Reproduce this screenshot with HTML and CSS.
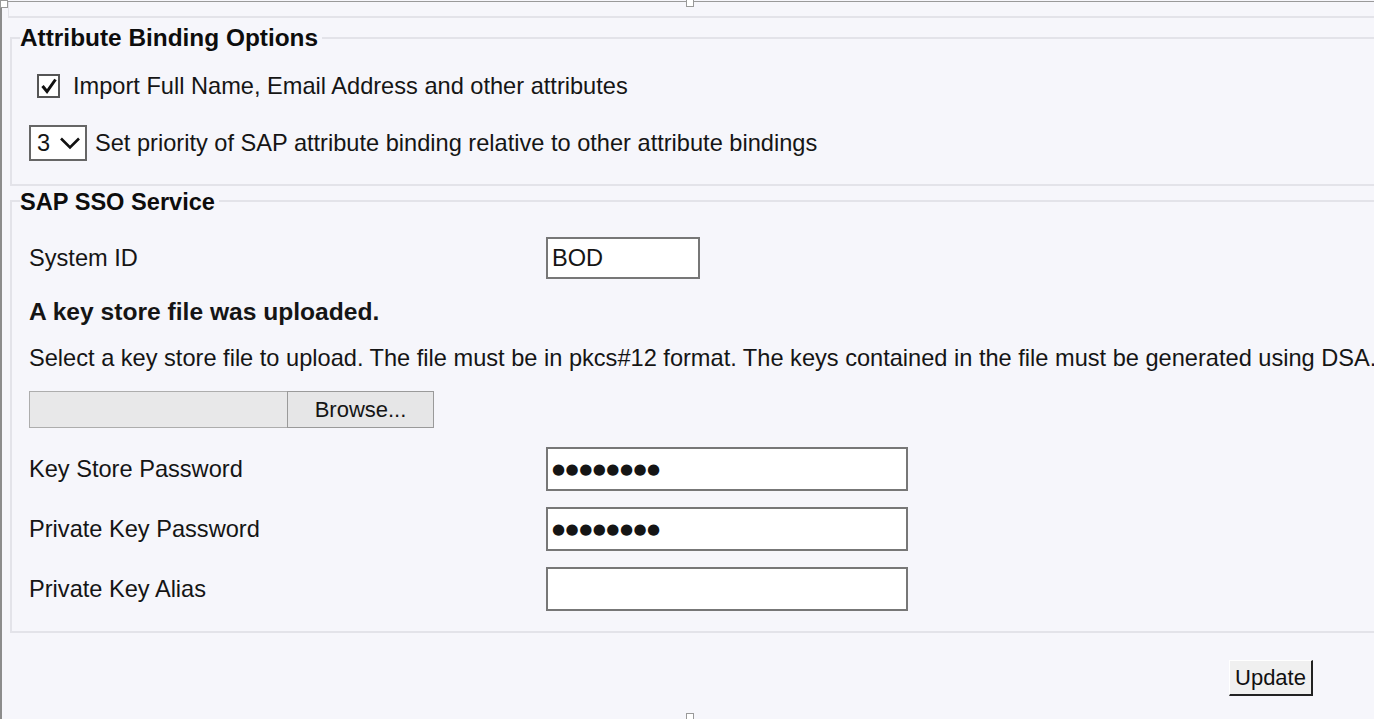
FILE: index.html
```html
<!DOCTYPE html>
<html>
<head>
<meta charset="utf-8">
<link rel="stylesheet" href="styles.css">
</head>
<body>
<div class="frame">
  <div class="top-panel"></div>

  <fieldset class="group group-attr">
    <legend class="legend">Attribute Binding Options</legend>
    <div class="row row-check">
      <span class="checkbox">
        <svg width="18" height="18" viewBox="0 0 18 18"><path d="M2.5 9 L7 14.5 L15.5 2.5" fill="none" stroke="#111" stroke-width="3" stroke-linejoin="miter"/></svg>
      </span>
      <span class="text">Import Full Name, Email Address and other attributes</span>
    </div>
    <div class="row row-select">
      <span class="select">
        <span class="select-val">3</span>
        <svg width="22" height="14" viewBox="0 0 22 14"><path d="M2 2.5 L11 11.5 L20 2.5" fill="none" stroke="#111" stroke-width="2.6"/></svg>
      </span>
      <span class="text">Set priority of SAP attribute binding relative to other attribute bindings</span>
    </div>
  </fieldset>

  <fieldset class="group group-sso">
    <legend class="legend legend-sso">SAP SSO Service</legend>
    <div class="form-row row-sysid">
      <span class="label">System ID</span>
      <span class="input input-short">BOD</span>
    </div>
    <div class="line bold line-uploaded">A key store file was uploaded.</div>
    <div class="line line-select">Select a key store file to upload. The file must be in pkcs#12 format. The keys contained in the file must be generated using DSA.</div>
    <div class="file-row">
      <span class="file-field"></span>
      <span class="file-btn">Browse...</span>
    </div>
    <div class="form-row row-pw">
      <span class="label">Key Store Password</span>
      <span class="input input-long"><span class="dots">●●●●●●●●</span></span>
    </div>
    <div class="form-row row-pw">
      <span class="label">Private Key Password</span>
      <span class="input input-long"><span class="dots">●●●●●●●●</span></span>
    </div>
    <div class="form-row row-pw">
      <span class="label">Private Key Alias</span>
      <span class="input input-long"></span>
    </div>
  </fieldset>

  <div class="actions">
    <span class="btn-update">Update</span>
  </div>

  <span class="handle handle-tl"></span>
  <span class="handle handle-tc"></span>
  <span class="handle handle-bc"></span>
</div>
</body>
</html>
```

FILE: styles.css
```css
html, body {
  margin: 0;
  padding: 0;
  background: #f6f6fb;
  overflow: hidden;
}
body {
  font-family: "Liberation Sans", Arial, sans-serif;
  font-size: 23.6px;
  color: #151515;
}
.frame {
  position: relative;
  height: 717px;
  border-left: 2px solid #8c8c8c;
  border-top: 1px solid #9a9a9a;
  margin-top: 1px;
  background: #f6f6fb;
}
.top-panel {
  height: 14px;
  margin-left: 6px;
  border-left: 1px solid #e2e2e8;
  border-bottom: 2px solid #e3e3e9;
}
.group {
  margin: 0 -30px 0 8px;
  padding: 0 0 0 8px;
  border: 2px solid #e3e3e9;
  border-right: none;
}
.legend {
  font-weight: bold;
  font-size: 24.4px;
  padding: 0 4px 0 0;
  margin-left: 0;
  color: #0d0d0d;
}
.legend-sso {
  font-size: 23.6px;
  padding-top: 3px;
}
.group-attr {
  margin-top: 6px;
  height: 162px;
  box-sizing: border-box;
}
.group-sso {
  margin-top: 0;
  height: 447px;
  box-sizing: border-box;
}
.row {
  display: flex;
  align-items: center;
}
.row-check {
  height: 40px;
  margin-top: 14px;
  padding-left: 17px;
}
.checkbox {
  width: 19px;
  height: 20px;
  border: 2px solid #555;
  background: #fff;
  display: flex;
  align-items: center;
  justify-content: center;
  margin-right: 13px;
}
.row-select {
  height: 42px;
  margin-top: 16px;
  padding-left: 9px;
}
.select {
  width: 58px;
  height: 36px;
  border: 2px solid #666;
  background: #fff;
  box-sizing: border-box;
  display: flex;
  align-items: center;
  padding-left: 6px;
  gap: 9px;
  margin-right: 8px;
}
.form-row {
  display: flex;
  align-items: center;
  padding-left: 9px;
}
.label {
  width: 517px;
}
.row-sysid {
  height: 42px;
  margin-top: 21px;
}
.input {
  background: #fff;
  border: 2px solid #777;
  box-sizing: border-box;
  display: flex;
  align-items: center;
  padding-left: 4px;
}
.input-short {
  width: 154px;
  height: 42px;
}
.input-long {
  width: 362px;
  height: 44px;
}
.dots {
  font-family: "DejaVu Sans", sans-serif;
  font-size: 15px;
  letter-spacing: 0.5px;
}
.row-pw {
  height: 44px;
  margin-top: 16px;
}
.line {
  padding-left: 9px;
  white-space: nowrap;
}
.bold {
  font-weight: bold;
  font-size: 24.6px;
}
.line-uploaded {
  margin-top: 19px;
  height: 25px;
}
.line-select {
  margin-top: 22px;
  height: 25px;
}
.file-row {
  display: flex;
  margin: 21px 0 0 9px;
  height: 37px;
}
.file-field {
  width: 257px;
  background: #e8e8e9;
  border: 1px solid #adadad;
  border-right: none;
}
.file-btn {
  width: 145px;
  background: #e6e6e7;
  border: 1px solid #9a9a9a;
  display: flex;
  align-items: center;
  justify-content: center;
  font-size: 22px;
}
.file-row + .row-pw {
  margin-top: 19px;
}
.actions {
  display: flex;
  justify-content: flex-end;
  padding-right: 61px;
  margin-top: 27px;
}
.btn-update {
  width: 84px;
  height: 36px;
  box-sizing: border-box;
  display: flex;
  align-items: center;
  justify-content: center;
  background: #f0f0f0;
  border-top: 1px solid #fff;
  border-left: 1px solid #fff;
  border-right: 2px solid #222;
  border-bottom: 2px solid #222;
  color: #111;
  font-size: 22px;
}
.handle {
  position: absolute;
  width: 6px;
  height: 6px;
  background: #fff;
  border: 1px solid #999;
}
.handle-tl { left: -2px; top: -2px; }
.handle-tc { left: 684px; top: -3px; }
.handle-bc { left: 684px; top: 711px; }
```
